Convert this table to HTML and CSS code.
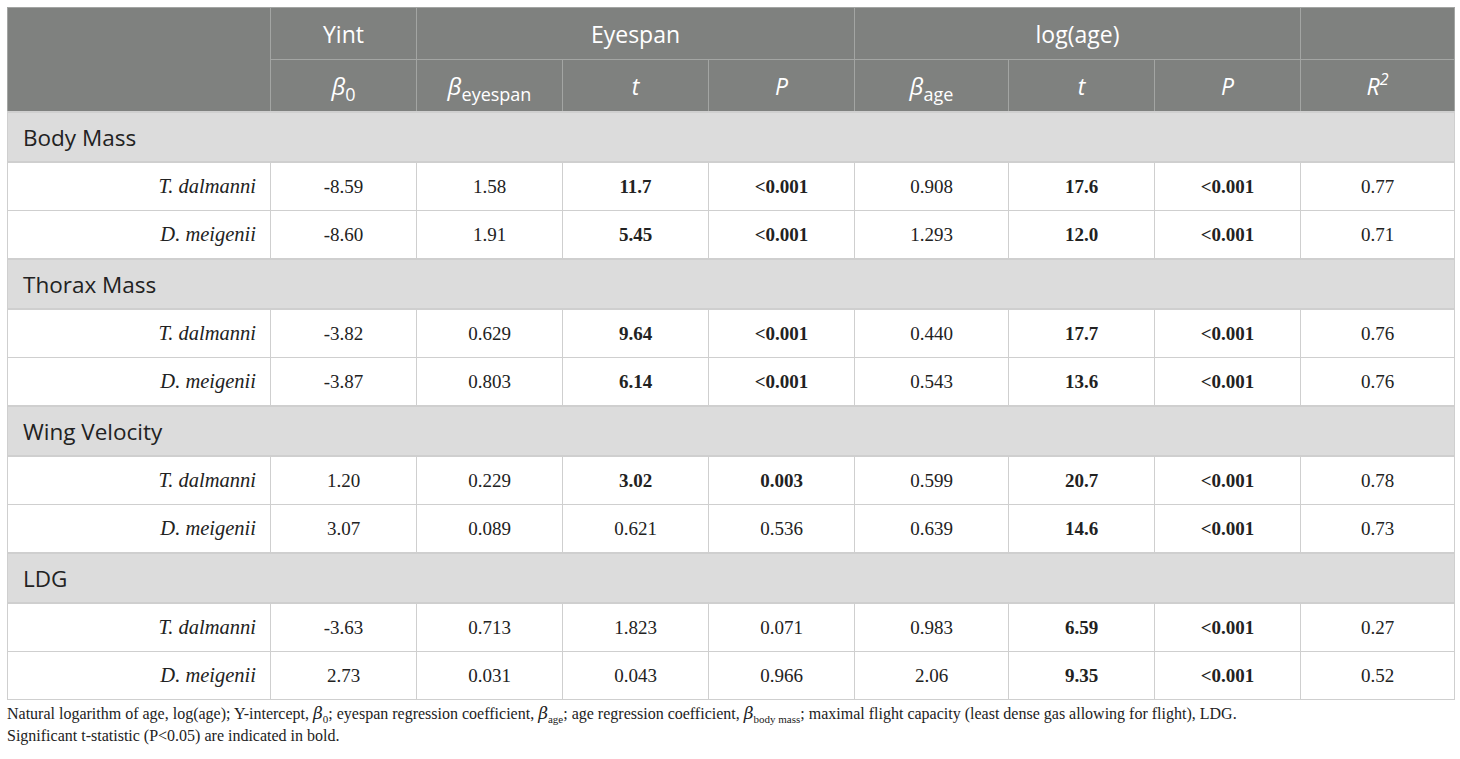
FILE: index.html
```html
<!DOCTYPE html>
<html lang="en">
<head>
    <meta charset="UTF-8">
    <title>Regression table</title>
    <link rel="stylesheet" href="styles.css">
</head>
<body>

    <table class="results">
        <colgroup>
            <col class="c-name">
            <col class="c-num">
            <col class="c-num">
            <col class="c-num">
            <col class="c-num">
            <col class="c-wide">
            <col class="c-num">
            <col class="c-num">
            <col class="c-wide">
        </colgroup>
        <thead>
            <tr class="head-top">
                <th rowspan="2"></th>
                <th>Yint</th>
                <th colspan="3">Eyespan</th>
                <th colspan="3">log(age)</th>
                <th></th>
            </tr>
            <tr class="head-sub">
                <th><i class="beta">β</i><sub>0</sub></th>
                <th><i class="beta">β</i><sub>eyespan</sub></th>
                <th><i>t</i></th>
                <th><i>P</i></th>
                <th><i class="beta">β</i><sub>age</sub></th>
                <th><i>t</i></th>
                <th><i>P</i></th>
                <th><i>R<sup>2</sup></i></th>
            </tr>
        </thead>
        <tbody>
            <tr class="section"><td colspan="9">Body Mass</td></tr>
            <tr>
                <td class="species">T. dalmanni</td>
                <td>-8.59</td><td>1.58</td><td class="sig">11.7</td><td class="sig">&lt;0.001</td>
                <td>0.908</td><td class="sig">17.6</td><td class="sig">&lt;0.001</td><td>0.77</td>
            </tr>
            <tr>
                <td class="species">D. meigenii</td>
                <td>-8.60</td><td>1.91</td><td class="sig">5.45</td><td class="sig">&lt;0.001</td>
                <td>1.293</td><td class="sig">12.0</td><td class="sig">&lt;0.001</td><td>0.71</td>
            </tr>
            <tr class="section"><td colspan="9">Thorax Mass</td></tr>
            <tr>
                <td class="species">T. dalmanni</td>
                <td>-3.82</td><td>0.629</td><td class="sig">9.64</td><td class="sig">&lt;0.001</td>
                <td>0.440</td><td class="sig">17.7</td><td class="sig">&lt;0.001</td><td>0.76</td>
            </tr>
            <tr>
                <td class="species">D. meigenii</td>
                <td>-3.87</td><td>0.803</td><td class="sig">6.14</td><td class="sig">&lt;0.001</td>
                <td>0.543</td><td class="sig">13.6</td><td class="sig">&lt;0.001</td><td>0.76</td>
            </tr>
            <tr class="section"><td colspan="9">Wing Velocity</td></tr>
            <tr>
                <td class="species">T. dalmanni</td>
                <td>1.20</td><td>0.229</td><td class="sig">3.02</td><td class="sig">0.003</td>
                <td>0.599</td><td class="sig">20.7</td><td class="sig">&lt;0.001</td><td>0.78</td>
            </tr>
            <tr>
                <td class="species">D. meigenii</td>
                <td>3.07</td><td>0.089</td><td>0.621</td><td>0.536</td>
                <td>0.639</td><td class="sig">14.6</td><td class="sig">&lt;0.001</td><td>0.73</td>
            </tr>
            <tr class="section"><td colspan="9">LDG</td></tr>
            <tr>
                <td class="species">T. dalmanni</td>
                <td>-3.63</td><td>0.713</td><td>1.823</td><td>0.071</td>
                <td>0.983</td><td class="sig">6.59</td><td class="sig">&lt;0.001</td><td>0.27</td>
            </tr>
            <tr>
                <td class="species">D. meigenii</td>
                <td>2.73</td><td>0.031</td><td>0.043</td><td>0.966</td>
                <td>2.06</td><td class="sig">9.35</td><td class="sig">&lt;0.001</td><td>0.52</td>
            </tr>
        </tbody>
    </table>

    <p class="note">
        Natural logarithm of age, log(age); Y-intercept, <i class="beta">β</i><sub>0</sub>; eyespan regression coefficient, <i class="beta">β</i><sub>age</sub>; age regression coefficient, <i class="beta">β</i><sub>body mass</sub>; maximal flight capacity (least dense gas allowing for flight), LDG.<br>
        Significant t-statistic (P&lt;0.05) are indicated in bold.
    </p>

</body>
</html>
```

FILE: styles.css
```css
body {
    margin: 0;
    padding: 7px;
    background-color: #fff;
    color: #222;
    font-family: 'Liberation Serif', 'DejaVu Serif', serif;
}
.results {
    width: 1446px;
    table-layout: fixed;
    border-collapse: collapse;
    border: 1px solid #cfcfcf;
}
.c-name {
    width: 263px;
}
.c-num {
    width: 146px;
}
.c-wide {
    width: 154px;
}
th {
    background-color: #7f817f;
    color: #fff;
    font-family: 'Open Sans', 'Noto Sans', sans-serif;
    font-weight: normal;
    font-size: 23px;
    text-align: center;
    border: 1px solid #a3a5a3;
    padding: 0;
}
.head-top th {
    height: 51px;
}
.head-sub th {
    height: 51px;
}
th sub {
    font-size: 18px;
    font-style: normal;
    vertical-align: -6px;
    line-height: 0;
}
th sup {
    font-size: 16px;
    vertical-align: 10px;
    line-height: 0;
}
.beta {
    font-family: 'DejaVu Serif', serif;
    font-style: italic;
}
th .beta {
    font-family: 'Open Sans', sans-serif;
    font-size: 24px;
}
td {
    height: 47px;
    padding: 0;
    border: 1px solid #cfcfcf;
    text-align: center;
    font-size: 19px;
}
td.species {
    text-align: right;
    font-style: italic;
    padding-right: 14px;
    font-size: 20.5px;
}
td.sig {
    font-weight: bold;
}
.section td {
    height: 48px;
    background-color: #dcdcdc;
    border-top: 2px solid #cfcfcf;
    border-bottom: 2px solid #cfcfcf;
    text-align: left;
    padding-left: 15px;
    font-family: 'Open Sans', 'Noto Sans', sans-serif;
    font-size: 22.5px;
    color: #222;
}
.note {
    margin: 2px 0 0;
    font-size: 16px;
    line-height: 22px;
    color: #222;
}
.note sub {
    font-size: 11px;
    line-height: 0;
}
.note .beta {
    font-size: 17px;
}
```
